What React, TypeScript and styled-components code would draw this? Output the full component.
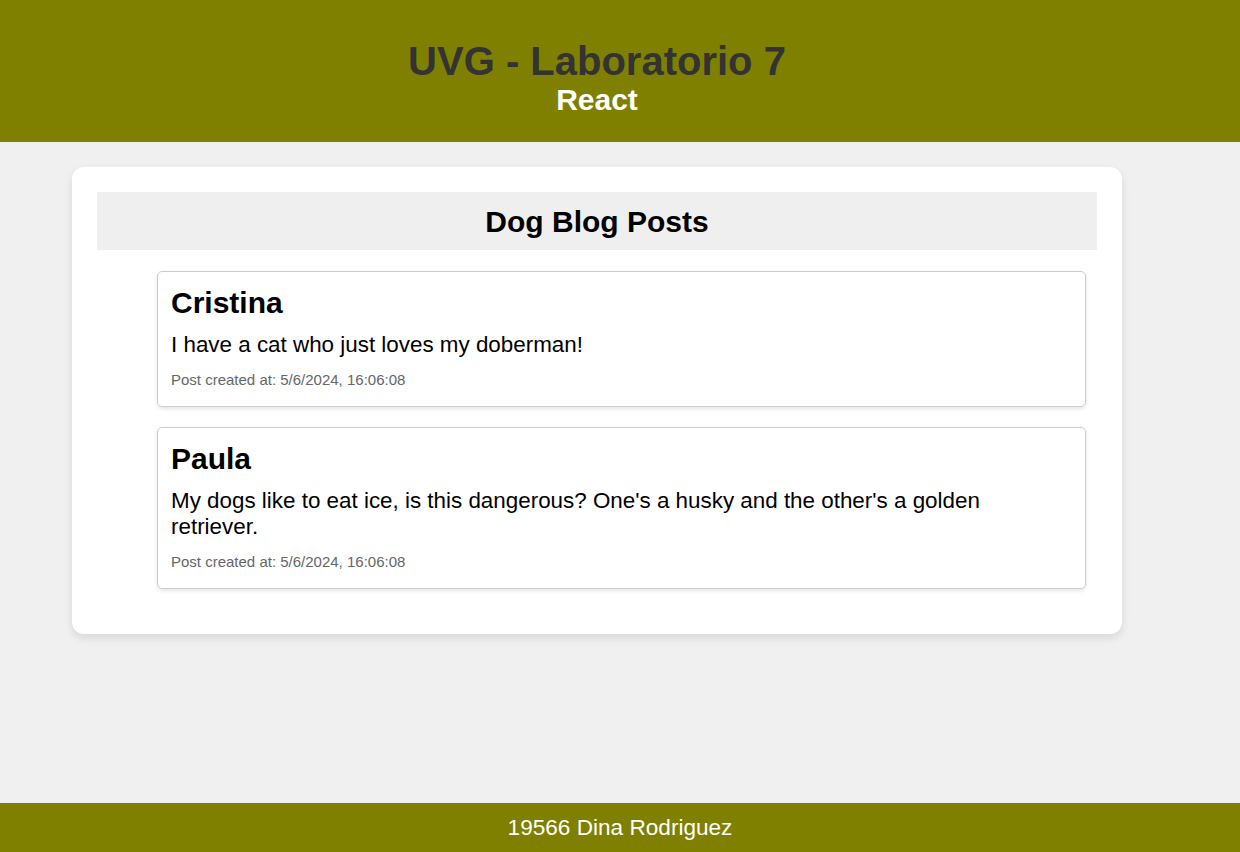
import styled, { createGlobalStyle } from "styled-components";

const GlobalStyle = createGlobalStyle`
  html, body {
    margin: 0;
    padding: 0;
    background: #f0f0f0;
    font-family: "Liberation Sans", Arial, sans-serif;
  }
`;

const Page = styled.div`
  display: flex;
  flex-direction: column;
  min-height: 852px;
`;

const Header = styled.header`
  background: #808000;
  height: 142px;
  box-sizing: border-box;
  padding: 38px 46px 0 0;
  display: flex;
  flex-direction: column;
  align-items: center;
`;

const Title = styled.h1`
  margin: 0;
  font-size: 40px;
  line-height: 46px;
  font-weight: 700;
  color: #333333;
`;

const Subtitle = styled.h2`
  margin: 0;
  font-size: 30px;
  line-height: 32px;
  font-weight: 700;
  color: #ffffff;
`;

const Main = styled.main`
  flex: 1;
  padding: 25px 0 0 72px;
`;

const Panel = styled.section`
  width: 1050px;
  box-sizing: border-box;
  background: #ffffff;
  border-radius: 12px;
  box-shadow: 0 4px 8px rgba(0, 0, 0, 0.1);
  padding: 25px 25px 45px;
`;

const PanelTitle = styled.h2`
  margin: 0;
  background: #efefef;
  height: 58px;
  display: flex;
  align-items: center;
  justify-content: center;
  padding-top: 2px;
  box-sizing: border-box;
  font-size: 30px;
  font-weight: 700;
  color: #000000;
`;

const PostList = styled.ul`
  list-style: none;
  margin: 21px 11px 0 60px;
  padding: 0;
  display: flex;
  flex-direction: column;
  gap: 20px;
`;

const Post = styled.li`
  border: 1px solid #cccccc;
  border-radius: 5px;
  box-shadow: 0 2px 4px rgba(0, 0, 0, 0.1);
  padding: 13px 13px 18px;
`;

const Author = styled.h3`
  margin: 0 0 12px;
  font-size: 30px;
  line-height: 35px;
  font-weight: 700;
  color: #000000;
`;

const Body = styled.p`
  margin: 0 0 13px;
  font-size: 22.4px;
  line-height: normal;
  color: #000000;
`;

const Stamp = styled.p`
  margin: 0;
  font-size: 15px;
  line-height: 17px;
  color: #666666;
`;

const Footer = styled.footer`
  background: #808000;
  height: 49px;
  display: flex;
  align-items: center;
  justify-content: center;
  font-size: 22.6px;
  color: #ffffff;
`;

const posts = [
  { author: "Cristina", text: "I have a cat who just loves my doberman!", created: "5/6/2024, 16:06:08" },
  {
    author: "Paula",
    text: "My dogs like to eat ice, is this dangerous? One's a husky and the other's a golden retriever.",
    created: "5/6/2024, 16:06:08",
  },
];

export default function App() {
  return (
    <Page>
      <GlobalStyle />
      <Header>
        <Title>UVG - Laboratorio 7</Title>
        <Subtitle>React</Subtitle>
      </Header>
      <Main>
        <Panel>
          <PanelTitle>Dog Blog Posts</PanelTitle>
          <PostList>
            {posts.map((p) => (
              <Post key={p.author}>
                <Author>{p.author}</Author>
                <Body>{p.text}</Body>
                <Stamp>Post created at: {p.created}</Stamp>
              </Post>
            ))}
          </PostList>
        </Panel>
      </Main>
      <Footer>19566 Dina Rodriguez</Footer>
    </Page>
  );
}
